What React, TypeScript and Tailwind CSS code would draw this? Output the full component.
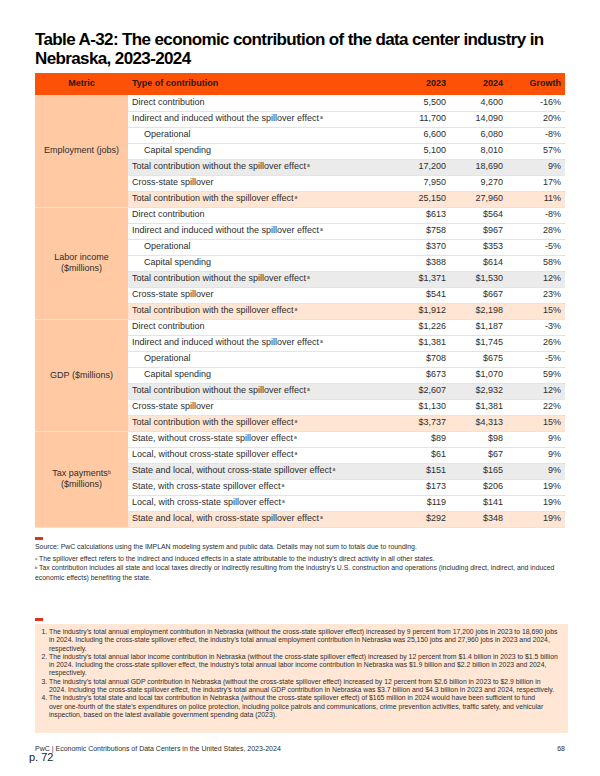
import React from "react";

type Row = {
  label: string;
  sup?: string;
  v23: string;
  v24: string;
  growth: string;
  indent?: boolean;
  tone?: "gray" | "peach";
};

type Section = {
  metric: React.ReactNode;
  rows: Row[];
};

const sections: Section[] = [
  {
    metric: <>Employment (jobs)</>,
    rows: [
      { label: "Direct contribution", v23: "5,500", v24: "4,600", growth: "-16%" },
      { label: "Indirect and induced without the spillover effect", sup: "a", v23: "11,700", v24: "14,090", growth: "20%" },
      { label: "Operational", indent: true, v23: "6,600", v24: "6,080", growth: "-8%" },
      { label: "Capital spending", indent: true, v23: "5,100", v24: "8,010", growth: "57%" },
      { label: "Total contribution without the spillover effect", sup: "a", v23: "17,200", v24: "18,690", growth: "9%", tone: "gray" },
      { label: "Cross-state spillover", v23: "7,950", v24: "9,270", growth: "17%" },
      { label: "Total contribution with the spillover effect", sup: "a", v23: "25,150", v24: "27,960", growth: "11%", tone: "peach" },
    ],
  },
  {
    metric: (
      <>
        Labor income
        <br />
        ($millions)
      </>
    ),
    rows: [
      { label: "Direct contribution", v23: "$613", v24: "$564", growth: "-8%" },
      { label: "Indirect and induced without the spillover effect", sup: "a", v23: "$758", v24: "$967", growth: "28%" },
      { label: "Operational", indent: true, v23: "$370", v24: "$353", growth: "-5%" },
      { label: "Capital spending", indent: true, v23: "$388", v24: "$614", growth: "58%" },
      { label: "Total contribution without the spillover effect", sup: "a", v23: "$1,371", v24: "$1,530", growth: "12%", tone: "gray" },
      { label: "Cross-state spillover", v23: "$541", v24: "$667", growth: "23%" },
      { label: "Total contribution with the spillover effect", sup: "a", v23: "$1,912", v24: "$2,198", growth: "15%", tone: "peach" },
    ],
  },
  {
    metric: <>GDP ($millions)</>,
    rows: [
      { label: "Direct contribution", v23: "$1,226", v24: "$1,187", growth: "-3%" },
      { label: "Indirect and induced without the spillover effect", sup: "a", v23: "$1,381", v24: "$1,745", growth: "26%" },
      { label: "Operational", indent: true, v23: "$708", v24: "$675", growth: "-5%" },
      { label: "Capital spending", indent: true, v23: "$673", v24: "$1,070", growth: "59%" },
      { label: "Total contribution without the spillover effect", sup: "a", v23: "$2,607", v24: "$2,932", growth: "12%", tone: "gray" },
      { label: "Cross-state spillover", v23: "$1,130", v24: "$1,381", growth: "22%" },
      { label: "Total contribution with the spillover effect", sup: "a", v23: "$3,737", v24: "$4,313", growth: "15%", tone: "peach" },
    ],
  },
  {
    metric: (
      <>
        Tax payments<sup className="text-[5px]">b</sup>
        <br />
        ($millions)
      </>
    ),
    rows: [
      { label: "State, without cross-state spillover effect", sup: "a", v23: "$89", v24: "$98", growth: "9%" },
      { label: "Local, without cross-state spillover effect", sup: "a", v23: "$61", v24: "$67", growth: "9%" },
      { label: "State and local, without cross-state spillover effect", sup: "a", v23: "$151", v24: "$165", growth: "9%", tone: "gray" },
      { label: "State, with cross-state spillover effect", sup: "a", v23: "$173", v24: "$206", growth: "19%" },
      { label: "Local, with cross-state spillover effect", sup: "a", v23: "$119", v24: "$141", growth: "19%" },
      { label: "State and local, with cross-state spillover effect", sup: "a", v23: "$292", v24: "$348", growth: "19%", tone: "peach" },
    ],
  },
];

const findings: React.ReactNode[] = [
  "The industry’s total annual employment contribution in Nebraska (without the cross-state spillover effect) increased by 9 percent from 17,200 jobs in 2023 to 18,690 jobs in 2024. Including the cross-state spillover effect, the industry’s total annual employment contribution in Nebraska was 25,150 jobs and 27,960 jobs in 2023 and 2024, respectively.",
  "The industry’s total annual labor income contribution in Nebraska (without the cross-state spillover effect) increased by 12 percent from $1.4 billion in 2023 to $1.5 billion in 2024. Including the cross-state spillover effect, the industry’s total annual labor income contribution in Nebraska was $1.9 billion and $2.2 billion in 2023 and 2024, respectively.",
  <>
    The industry’s total annual GDP contribution in Nebraska (without the cross-state spillover effect) increased by 12 percent from $2.6 billion in 2023 to $2.9 billion in
    <br />
    2024. Including the cross-state spillover effect, the industry’s total annual GDP contribution in Nebraska was $3.7 billion and $4.3 billion in 2023 and 2024, respectively.
  </>,
  <>
    The industry’s total state and local tax contribution in Nebraska (without the cross-state spillover effect) of $165 million in 2024 would have been sufficient to fund
    <br />
    over one-fourth of the state’s expenditures on police protection, including police patrols and communications, crime prevention activities, traffic safety, and vehicular
    <br />
    inspection, based on the latest available government spending data (2023).
  </>,
];

const toneBg = (tone?: "gray" | "peach") =>
  tone === "gray" ? "bg-[#ebebeb]" : tone === "peach" ? "bg-[#ffe5d3]" : "bg-white";

export default function App() {
  return (
    <div
      className="relative w-[600px] h-[776px] bg-white text-[#2d2d2d] px-[35px] pt-[30px]"
      style={{ fontFamily: '"Liberation Sans", Arial, sans-serif' }}
    >
      {/* Title */}
      <h1 className="text-[17px] font-bold leading-[19px] tracking-[-0.62px] text-black">
        Table A-32: The economic contribution of the data center industry in Nebraska, 2023-2024
      </h1>

      {/* Table */}
      <table className="mt-[5px] w-[530px] border-collapse text-[9px] table-fixed">
        <colgroup>
          <col className="w-[93px]" />
          <col />
          <col className="w-[60px]" />
          <col className="w-[57px]" />
          <col className="w-[58px]" />
        </colgroup>
        <thead>
          <tr className="h-[22px] bg-[#fd5108] font-bold text-[#2a1a10]">
            <th className="text-center font-bold">Metric</th>
            <th className="text-left font-bold pl-[4px]">Type of contribution</th>
            <th className="text-right font-bold pr-[4px]">2023</th>
            <th className="text-right font-bold pr-[4px]">2024</th>
            <th className="text-right font-bold pr-[4px]">Growth</th>
          </tr>
        </thead>
        <tbody>
          {sections.map((s, si) =>
            s.rows.map((r, ri) => (
              <tr key={`${si}-${ri}`} className={`h-[16px] ${toneBg(r.tone)}`}>
                {ri === 0 && (
                  <td
                    rowSpan={s.rows.length}
                    className="bg-[#ffc9a4] text-center align-middle leading-[11px] border-b border-[#fbe0cd]"
                  >
                    {s.metric}
                  </td>
                )}
                <td
                  className={`border-b border-[#e4e4e4] whitespace-nowrap ${r.indent ? "pl-[16px]" : "pl-[4px]"}`}
                >
                  {r.label}
                  {r.sup && <sup className="text-[5px] ml-[1px]">{r.sup}</sup>}
                </td>
                <td className="border-b border-[#e4e4e4] text-right pr-[4px]">{r.v23}</td>
                <td className="border-b border-[#e4e4e4] text-right pr-[4px]">{r.v24}</td>
                <td className="border-b border-[#e4e4e4] text-right pr-[4px]">{r.growth}</td>
              </tr>
            ))
          )}
        </tbody>
      </table>

      {/* Source & notes */}
      <div className="mt-[9px] w-[8px] h-[3px] bg-[#e0301e]" />
      <p className="mt-[2px] text-[6.9px] leading-[9px]">
        Source: PwC calculations using the IMPLAN modeling system and public data. Details may not sum to totals due to rounding.
      </p>
      <div className="mt-[3px] text-[6.9px] leading-[9.5px]">
        <p>
          <span className="text-[4px] align-top">a</span> The spillover effect refers to the indirect and induced effects in a state attributable to the industry’s direct activity in all other states.
        </p>
        <p>
          <span className="text-[4px] align-top">b</span> Tax contribution includes all state and local taxes directly or indirectly resulting from the industry’s U.S. construction and operations (including direct, indirect, and induced economic effects) benefiting the state.
        </p>
      </div>

      {/* Key findings */}
      <div className="mt-[36px] w-[8px] h-[3px] bg-[#e0301e]" />
      <div className="mt-[3px] w-[533px] h-[109px] bg-[#ffe6d5] pt-[4px] pl-[6px] pr-[4px]">
        <ol className="list-decimal pl-[8px] text-[6.85px] leading-[8.3px]">
          {findings.map((f, i) => (
            <li key={i}>{f}</li>
          ))}
        </ol>
      </div>

      {/* Footer */}
      <div className="mt-[11px] flex justify-between text-[7px] leading-[10px] w-[530px]">
        <span>PwC | Economic Contributions of Data Centers in the United States, 2023-2024</span>
        <span>68</span>
      </div>
      <span className="absolute left-[29px] top-[752px] text-[11px] leading-none text-[#222]">p. 72</span>
    </div>
  );
}
